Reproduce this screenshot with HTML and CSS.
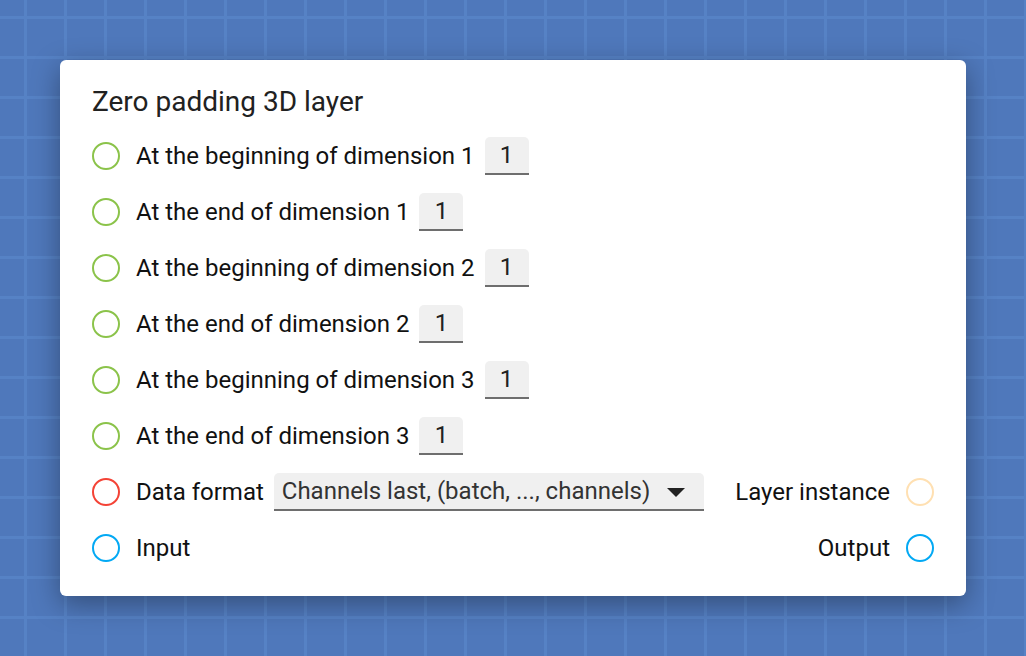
FILE: index.html
```html
<!DOCTYPE html>
<html>
<head>
<meta charset="utf-8">
<link rel="stylesheet" href="styles.css">
</head>
<body>
<div class="card">
  <div class="title">Zero padding 3D layer</div>
  <div class="row"><span class="port green"></span><span class="label">At the beginning of dimension 1</span><span class="num">1</span></div>
  <div class="row"><span class="port green"></span><span class="label">At the end of dimension 1</span><span class="num">1</span></div>
  <div class="row"><span class="port green"></span><span class="label">At the beginning of dimension 2</span><span class="num">1</span></div>
  <div class="row"><span class="port green"></span><span class="label">At the end of dimension 2</span><span class="num">1</span></div>
  <div class="row"><span class="port green"></span><span class="label">At the beginning of dimension 3</span><span class="num">1</span></div>
  <div class="row"><span class="port green"></span><span class="label">At the end of dimension 3</span><span class="num">1</span></div>
  <div class="row">
    <span class="port red"></span><span class="label">Data format</span>
    <span class="select"><span class="select-text">Channels last, (batch, ..., channels)</span><span class="arrow"></span></span>
    <span class="spacer"></span>
    <span class="label">Layer instance</span><span class="port peach right"></span>
  </div>
  <div class="row">
    <span class="port blue"></span><span class="label">Input</span>
    <span class="spacer"></span>
    <span class="label">Output</span><span class="port blue right"></span>
  </div>
</div>
</body>
</html>
```
FILE: styles.css
```css
html, body {
  margin: 0;
  padding: 0;
}
body {
  width: 1026px;
  height: 656px;
  box-sizing: border-box;
  padding: 60px;
  overflow: hidden;
  font-family: Roboto, "Liberation Sans", sans-serif;
  background-color: #4f78bb;
  background-image:
    linear-gradient(90deg, transparent 24px, #5682c5 24px, #5682c5 27px, transparent 27px),
    linear-gradient(180deg, transparent 16px, #5682c5 16px, #5682c5 19px, transparent 19px);
  background-size: 40px 40px;
}
.card {
  width: 906px;
  height: 536px;
  box-sizing: border-box;
  background: #fff;
  border-radius: 6px;
  box-shadow: 0 8px 28px rgba(0, 0, 0, 0.35);
  padding: 18px 32px 20px 32px;
  display: flex;
  flex-direction: column;
}
.title {
  font-size: 28px;
  line-height: 48px;
  height: 48px;
  color: #212121;
  margin-bottom: 2px;
}
.row {
  height: 56px;
  display: flex;
  align-items: center;
  font-size: 24px;
  color: #111;
}
.port {
  width: 28px;
  height: 28px;
  box-sizing: border-box;
  border-radius: 50%;
  border: 2px solid #8bc34a;
  margin-right: 16px;
  flex: none;
}
.port.right {
  margin-right: 0;
  margin-left: 16px;
}
.port.red { border-color: #f44336; }
.port.blue { border-color: #03a9f4; }
.port.peach { border-color: #ffe0b2; }
.label {
  white-space: nowrap;
}
.num {
  margin-left: 10px;
  width: 44px;
  height: 38px;
  box-sizing: border-box;
  background: #f0f0f0;
  border-radius: 5px 5px 0 0;
  border-bottom: 2px solid #6e6e6e;
  display: flex;
  align-items: center;
  justify-content: center;
  color: #222;
}
.select {
  margin-left: 10px;
  width: 430px;
  height: 38px;
  box-sizing: border-box;
  background: #f0f0f0;
  border-radius: 5px 5px 0 0;
  border-bottom: 2px solid #6e6e6e;
  display: flex;
  align-items: center;
  padding: 0 19px 0 8px;
  color: #333;
}
.select-text {
  flex: 1;
  white-space: nowrap;
}
.arrow {
  width: 0;
  height: 0;
  border-left: 9px solid transparent;
  border-right: 9px solid transparent;
  border-top: 9px solid #222;
  margin-top: 2px;
}
.spacer {
  flex: 1;
}
```
